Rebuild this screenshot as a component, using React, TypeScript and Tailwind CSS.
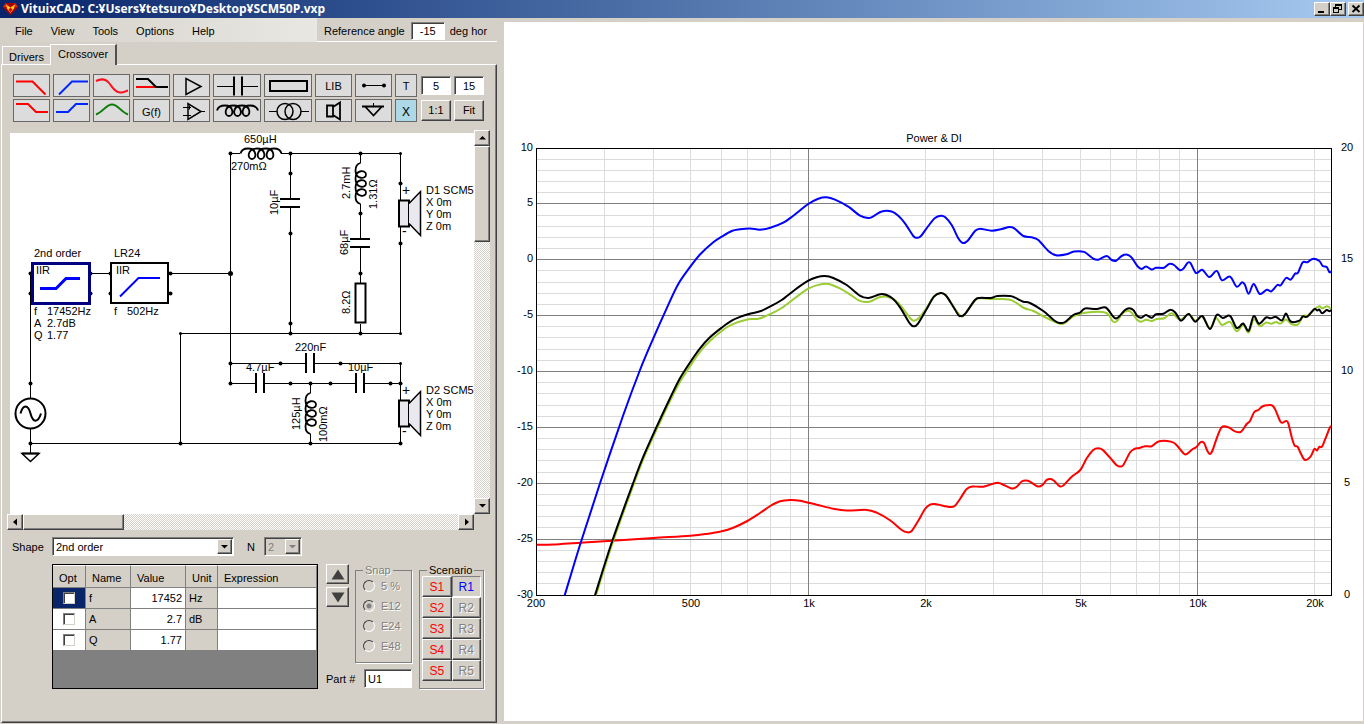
import React from "react";
import clsx from "clsx";

const raised =
  "border border-t-white border-l-white border-r-[#404040] border-b-[#404040] shadow-[inset_-1px_-1px_0_#808080] bg-[#d4d0c8]";
const sunken =
  "border border-t-[#808080] border-l-[#808080] border-r-white border-b-white shadow-[inset_1px_1px_0_#404040]";
const etched = "text-[#808080] [text-shadow:1px_1px_0_white]";
const groupBox = "border border-[#808080] shadow-[1px_1px_0_white]";
const track =
  "bg-[repeating-conic-gradient(#ffffff_0_25%,#d4d0c8_0_50%)] bg-[length:2px_2px]";

type Point = [number, number];

// Catmull-Rom through all points, written as cubic beziers
const smooth = (pts: Point[]) =>
  pts.reduce((d, p, i) => {
    if (i === 0) return `M${p[0]} ${p[1]}`;
    const a = pts[i - 2] || pts[i - 1];
    const b = pts[i - 1];
    const c = pts[i + 1] || p;
    const k = 6;
    return `${d}C${b[0] + (p[0] - a[0]) / k} ${b[1] + (p[1] - a[1]) / k} ${
      p[0] - (c[0] - b[0]) / k
    } ${p[1] - (c[1] - b[1]) / k} ${p[0]} ${p[1]}`;
  }, "");

export default () => {
  return (
    <div className="min-h-screen flex flex-col bg-[#d4d0c8] text-black text-[11px] leading-[14px] font-['Liberation_Sans',Arial,sans-serif]">
      <TitleBar />
      <main className="flex flex-1">
        <div className="w-[497px] shrink-0 flex flex-col">
          <MenuBar />
          <Tabs />
          <section className="flex-1 ml-px mb-px border border-t-white border-l-white border-r-[#404040] border-b-[#404040] shadow-[inset_-1px_-1px_0_#808080]">
            <Toolbar />
            <Schematic />
            <ShapeRow />
            <div className="flex ml-[50px] mt-2">
              <ParameterTable />
              <div className="ml-2">
                <div className="flex">
                  <MoveButtons />
                  <Snap />
                </div>
                <div className="flex items-center justify-between mt-[6px]">
                  <label htmlFor="part">Part #</label>
                  <input
                    id="part"
                    defaultValue="U1"
                    className={clsx("w-12 h-[19px] px-[3px] bg-white", sunken)}
                  />
                </div>
              </div>
              <Scenario />
            </div>
          </section>
        </div>
        <section className="flex flex-1 min-w-0 bg-white mt-1 ml-[7px] mr-px mb-[3px]">
          <Chart />
        </section>
      </main>
    </div>
  );
};

const TitleBar = () => (
  <header className="h-[18px] flex items-center bg-linear-to-r from-[#0a246a] to-[#a6caf0] pl-[3px]">
    <svg className="w-[15px] h-3" viewBox="0 0 15 12">
      <path d="M3 0h9l3 4-7.500 8L0 4z" fill="#b80000" />
      <path d="M0 4L3 0l2 4zM10 4l2-4 3 4z" fill="#e02a10" />
      <path d="M3 1.500l4.500 3 4.500-3-1 4-3.500 4.500-3.500-4.500z" fill="#ffd020" />
      <path d="M7.500 4.500l2 2-2 3-2-3z" fill="#d01000" />
      <path d="M5 1h5l-2.500 1.500z" fill="#7a0000" />
    </svg>
    <h1 className="flex-1 pl-[3px] text-xs font-bold text-white font-['Open_Sans','Liberation_Sans',sans-serif]">
      VituixCAD: C:¥Users¥tetsuro¥Desktop¥SCM50P.vxp
    </h1>
    <div className="flex">
      <button aria-label="Minimize" className={clsx("w-4 h-[14px]", raised)}>
        <svg className="w-full h-full" viewBox="0 0 14 12">
          <path d="M3 9h6" stroke="black" strokeWidth="2" />
        </svg>
      </button>
      <button aria-label="Restore" className={clsx("w-4 h-[14px]", raised)}>
        <svg
          className="w-full h-full"
          viewBox="0 0 14 12"
          fill="none"
          stroke="black"
          shapeRendering="crispEdges"
        >
          <path d="M4.500 5V1.500h6v5H8M4 2h7" />
          <path d="M2.500 4.500h5v5h-5zM2 5h6" />
        </svg>
      </button>
      <button
        aria-label="Close"
        className={clsx("w-4 h-[14px] ml-[2px]", raised)}
      >
        <svg className="w-full h-full" viewBox="0 0 14 12">
          <path
            d="M3.500 2.500l7 6.500M10.500 2.500l-7 6.500"
            stroke="black"
            strokeWidth="1.800"
          />
        </svg>
      </button>
    </div>
  </header>
);

const MenuBar = () => (
  <div className="flex h-6">
    <nav className="w-[317px] flex items-center gap-[18px] pl-[15px] pt-[2px] bg-linear-to-r from-[#d4d0c8] to-[#e8e7e2]">
      {["File", "View", "Tools", "Options", "Help"].map((m) => (
        <button key={m}>{m}</button>
      ))}
    </nav>
    <div className="flex-1 flex items-center pl-[7px] pt-[2px] border-b border-white">
      <label htmlFor="angle">Reference angle</label>
      <input
        id="angle"
        defaultValue="-15"
        className={clsx(
          "w-[34px] h-[18px] ml-[6px] px-[2px] text-center bg-white",
          sunken
        )}
      />
      <span className="ml-[5px]">deg hor</span>
    </div>
  </div>
);

const Tabs = () => (
  <div role="tablist" className="flex items-end h-[22px] pl-[2px]">
    <button
      role="tab"
      aria-selected="false"
      className="w-12 h-[18px] pt-[2px] border-t border-l border-white"
    >
      Drivers
    </button>
    <button
      role="tab"
      aria-selected="true"
      className="relative w-[67px] h-[21px] -mb-px pb-[2px] bg-[#d4d0c8] border-t border-l border-r-2 border-t-white border-l-white border-r-[#505050]"
    >
      Crossover
    </button>
  </div>
);

// a run of wire loops, arcs above the axis
const coil = (x0: number, x1: number, first: number, pitch: number, n: number) => {
  let d = `M${x0} 0C${x0 + 1} -4 ${x0 + 4} -5 ${first - 4} -5`;
  for (let i = 0; i < n; i++) {
    const c = first + pitch * i;
    const next = i === n - 1 ? c + 4 : c + pitch - 4;
    d += `C${c + 5} -5 ${c + 5} 5.500 ${c} 5.500C${c - 5} 5.500 ${c - 5} -5 ${next} -5`;
  }
  return `${d}C${x1 - 4} -5 ${x1 - 1} -4 ${x1} 0`;
};

const Tool = ({
  name,
  wide,
  children,
}: {
  name: string;
  wide?: boolean;
  children: React.ReactNode;
}) => (
  <button
    aria-label={name}
    className="h-[23px] border border-[#686868] bg-[#dcdcdc]"
  >
    <svg
      className="w-full h-full"
      viewBox={wide ? "1 1 46 21" : "1 1 35 21"}
      fill="none"
      stroke="black"
      strokeWidth="2"
    >
      {children}
    </svg>
  </button>
);

const textTool = "h-[23px] border border-[#686868] bg-[#dcdcdc]";
const pushButton = clsx("h-[21px] mt-px pb-px", raised);

const Toolbar = () => (
  <div className="flex gap-1 ml-[11px] mt-[9px]">
    <div className="grid grid-cols-[repeat(5,37px)_48px_48px_37px_37px_22px] gap-x-[3px] gap-y-[2px]">
      <Tool name="Low pass">
        <path d="M3 7.500H19.500L32.500 20.500" stroke="red" />
      </Tool>
      <Tool name="High pass">
        <path d="M6 20.500L19 7.500H35" stroke="#0026ff" />
      </Tool>
      <Tool name="All pass">
        <path
          d="M3 7C7 5 12 4 16 9C20 14 22 18 27 18.500C30 19 32 17.500 35 16.500"
          stroke="#ff1020"
        />
      </Tool>
      <Tool name="Shelf">
        <path d="M3 13H23" stroke="red" />
        <path d="M3 5H15L23 13H35" />
      </Tool>
      <Tool name="Buffer">
        <path d="M13 4.500V20.500L28 12.500z" strokeWidth="1.500" />
      </Tool>
      <Tool name="Capacitor" wide>
        <path d="M4 12.500H21M29 12.500H45" strokeWidth="1" />
        <path d="M21 2.500V21.500M29 2.500V21.500" />
      </Tool>
      <Tool name="Resistor" wide>
        <path d="M6 7H43V17H6z" />
      </Tool>
      <button className={textTool}>LIB</button>
      <Tool name="Wire">
        <path d="M8.500 11.500H29.500" strokeWidth="1" />
        <circle cx="9" cy="11.500" r="1" />
        <circle cx="29" cy="11.500" r="1" />
      </Tool>
      <button className={textTool}>T</button>
      <Tool name="Low shelf">
        <path d="M3 5H15L23 13H35" stroke="red" />
      </Tool>
      <Tool name="High shelf">
        <path d="M3 13H15L23 5H35" stroke="#0026ff" />
      </Tool>
      <Tool name="Peak">
        <path d="M3 15.500C10 13 13 5.500 19 5.500S28 13 35 15.500" stroke="#0a7d0a" />
      </Tool>
      <button className={clsx(textTool, "pt-[3px]")}>G(f)</button>
      <Tool name="Op-amp">
        <path d="M15 4.500V20.500L28 12.500z" strokeWidth="1.500" />
        <path
          d="M10 8.500H18M10 16.500H18M28 12.500H32M16.500 6.500V10.500"
          strokeWidth="1"
        />
      </Tool>
      <Tool name="Inductor" wide>
        <path
          d={coil(-20.5, 20.5, -8.5, 8.5, 3)}
          transform="translate(24.500 11.500)"
          strokeWidth="1.800"
        />
      </Tool>
      <Tool name="Transformer" wide>
        <g strokeWidth="1.500">
          <circle cx="21" cy="12.500" r="8" />
          <circle cx="29" cy="12.500" r="8" />
          <path d="M5 12.500H13M37 12.500H45" strokeWidth="1" />
        </g>
      </Tool>
      <Tool name="Driver">
        <path d="M12 6.500H18V17.500H12zM18 8L25 3.500V20.500L18 16" strokeWidth="1.800" />
      </Tool>
      <Tool name="Ground">
        <path d="M7 7.500H29M10.500 8L18.500 16.500L26.500 8" strokeWidth="1.800" />
        <path d="M18.500 4V8" strokeWidth="1" />
      </Tool>
      <button className="h-[23px] pt-[3px] border border-[#686868] bg-[#add8e6] text-xs">
        X
      </button>
    </div>
    <div className="grid grid-cols-[30px_30px] grid-rows-[23px_23px] gap-x-[3px] gap-y-[2px]">
      <input
        aria-label="Grid"
        defaultValue="5"
        className={clsx("h-[19px] mt-[2px] min-w-0 text-center bg-white", sunken)}
      />
      <input
        aria-label="Step"
        defaultValue="15"
        className={clsx("h-[19px] mt-[2px] min-w-0 text-center bg-white", sunken)}
      />
      <button className={pushButton}>1:1</button>
      <button className={pushButton}>Fit</button>
    </div>
  </div>
);

const arrows = {
  up: "M4 8.500L7.500 5L11 8.500z",
  down: "M4 5L7.500 8.500L11 5z",
  left: "M9 3.500L5 7L9 10.500z",
  right: "M6 3.500L10 7L6 10.500z",
};

const ScrollButton = ({ dir }: { dir: keyof typeof arrows }) => (
  <button
    aria-label={`Scroll ${dir}`}
    className={clsx("w-4 h-4 shrink-0", raised)}
  >
    <svg className="w-full h-full" viewBox="0 0 14 14">
      <path d={arrows[dir]} />
    </svg>
  </button>
);

const Dot = ({ x, y, r = 2 }: { x: number; y: number; r?: number }) => (
  <circle cx={x} cy={y} r={r} fill="black" stroke="none" />
);

const dots: Point[] = [
  [30.5, 273.5], [30.5, 293.5], [90.5, 273.5], [90.5, 293.5],
  [110.5, 273.5], [110.5, 293.5], [170.5, 273.5], [170.5, 293.5],
  [30.5, 383.5], [30.5, 443.5], [180.5, 443.5],
  [230.5, 153.5], [230.5, 363.5], [230.5, 383.5],
  [290.5, 153.5], [290.5, 173.5], [290.5, 233.5], [290.5, 323.5], [290.5, 333.5],
  [360.5, 153.5], [360.5, 213.5], [360.5, 273.5], [360.5, 333.5],
  [400.5, 183.5], [400.5, 243.5],
  [280.5, 363.5], [340.5, 363.5],
  [290.5, 383.5], [310.5, 383.5], [330.5, 383.5], [390.5, 383.5], [400.5, 383.5],
  [310.5, 443.5], [400.5, 443.5],
];

// wire corners carry a smaller dot
const corners: Point[] = [
  [180.5, 333.5], [400.5, 153.5], [400.5, 333.5], [400.5, 363.5],
];

const labels: [number, number, string][] = [
  [34, 257, "2nd order"], [36, 274, "IIR"],
  [34, 315, "f"], [47, 315, "17452Hz"],
  [34, 327, "A"], [47, 327, "2.7dB"],
  [34, 339, "Q"], [47, 339, "1.77"],
  [114, 257, "LR24"], [116, 274, "IIR"],
  [114, 315, "f"], [127, 315, "502Hz"],
  [244, 143, "650µH"], [231, 170, "270mΩ"],
  [295, 351, "220nF"], [246, 371, "4.7µF"], [348, 371, "10µF"],
];

const verticalLabels: [number, number, string][] = [
  [278, 215, "10µF"], [350, 199, "2.7mH"], [377, 209, "1.31Ω"],
  [348, 255, "68µF"], [350, 314, "8.2Ω"],
  [300, 430, "125µH"], [327, 442, "100mΩ"],
];

const Driver = ({ y, name }: { y: number; name: string }) => (
  <g transform={`translate(0 ${y})`}>
    <path d="M399 200.500H409V226.500H399z" fill="#e8e8ee" strokeWidth="2" />
    <path d="M409 203.500L420.500 191.500V235.500L409 223.500" fill="#e8e8ee" strokeWidth="1.500" />
    <g fill="black" stroke="none">
      <text x="402" y="195" className="text-sm">+</text>
      <text x="402" y="236" className="text-sm">-</text>
      <text x="426" y="194">{name}</text>
      <text x="426" y="206">X 0m</text>
      <text x="426" y="218">Y 0m</text>
      <text x="426" y="230">Z 0m</text>
    </g>
  </g>
);

const loops = coil(-20.5, 20.5, -9, 9, 3);

const Schematic = () => (
  <div className="grid grid-cols-[467px_16px] grid-rows-[384px_16px] ml-[5px] mt-2">
    <div className="pl-[3px] pt-[3px] min-w-0 overflow-hidden">
      <svg
        className="bg-white text-[11px]"
        width="464"
        height="381"
        viewBox="10 133 464 381"
        fill="none"
        stroke="black"
      >
        <path
          shapeRendering="crispEdges"
          d="M30.500 273V398M30.500 428V453M30.500 443.500H400.500M90 273.500H110M170 273.500H230.500M230.500 153V383.500M180.500 443V333.500H400.500M230 153.500H240M281 153.500H400.500V200M400.500 227V334M290.500 153V199M290.500 207V333M360.500 153V163M360.500 204V239M360.500 247V283M360.500 324V333M230 363.500H306M314 363.500H400.500V400M230 383.500H256M264 383.500H356M364 383.500H400M310.500 383V393M310.500 434V443M400.500 427V443"
        />
        <path
          shapeRendering="crispEdges"
          strokeWidth="2"
          d="M280 199H300M280 207H300M350 239H370M350 247H370M306 353V373M314 353V373M256 373V393M264 373V393M356 373V393M364 373V393"
        />
        <path d="M355.500 283.500H365.500V322.500H355.500z" fill="white" strokeWidth="2" />
        <path d={loops} transform="translate(261 153.500)" strokeWidth="1.800" />
        <path d={loops} transform="translate(360.500 183.500) rotate(-90)" strokeWidth="1.800" />
        <path d={loops} transform="translate(310.500 413.500) rotate(-90)" strokeWidth="1.800" />
        <circle cx="30.500" cy="413.500" r="15" fill="white" strokeWidth="2" />
        <path
          d="M20.500 413.500C23 404 28 404 30.500 413.500S38 423 41 413.500"
          strokeWidth="2"
        />
        <path d="M22 453.500H39L30.500 461.500z" fill="white" strokeWidth="1.500" />
        <path d="M22 453.500H39" strokeWidth="2" />
        {dots.map(([x, y]) => (
          <Dot key={`${x}-${y}`} x={x} y={y} />
        ))}
        {corners.map(([x, y]) => (
          <Dot key={`${x}-${y}`} x={x} y={y} r={1.5} />
        ))}
        <Dot x={230.5} y={273.5} r={2.5} />
        <rect x="32.500" y="263.500" width="57" height="40" fill="white" stroke="#000080" strokeWidth="3" />
        <rect x="111" y="263" width="57" height="40" fill="white" strokeWidth="2" />
        <path d="M40 288.500H56L66 278.500H80" stroke="blue" strokeWidth="3" />
        <path d="M120 296.500L138.500 278H160" stroke="blue" strokeWidth="2" />
        <Driver y={0} name="D1 SCM50" />
        <Driver y={200} name="D2 SCM50" />
        <g fill="black" stroke="none">
          {labels.map(([x, y, t]) => (
            <text key={`${x}-${y}`} x={x} y={y}>
              {t}
            </text>
          ))}
          {verticalLabels.map(([x, y, t]) => (
            <text key={t} transform={`translate(${x} ${y}) rotate(-90)`}>
              {t}
            </text>
          ))}
        </g>
      </svg>
    </div>
    <div className={clsx("flex flex-col", track)}>
      <ScrollButton dir="up" />
      <div className={clsx("h-24", raised)} />
      <div className="flex-1" />
      <ScrollButton dir="down" />
    </div>
    <div className={clsx("flex", track)}>
      <ScrollButton dir="left" />
      <div className={clsx("w-[101px]", raised)} />
      <div className="flex-1" />
      <ScrollButton dir="right" />
    </div>
  </div>
);

const DropDown = ({
  id,
  value,
  className,
  disabled,
}: {
  id: string;
  value: string;
  className: string;
  disabled?: boolean;
}) => (
  <div className={clsx("relative h-[19px]", className)}>
    <select
      id={id}
      disabled={disabled}
      className={clsx(
        "appearance-none w-full h-full pl-[3px]",
        sunken,
        disabled ? "bg-[#d4d0c8] text-[#808080]" : "bg-white"
      )}
    >
      <option>{value}</option>
    </select>
    <span
      className={clsx(
        "absolute right-[2px] top-[2px] w-[15px] h-[15px] pointer-events-none",
        raised
      )}
    >
      <svg className="w-full h-full" viewBox="0 0 13 13">
        <path d="M3 5L6.500 8.500L10 5z" fill={disabled ? "#808080" : "black"} />
      </svg>
    </span>
  </div>
);

const ShapeRow = () => (
  <div className="flex items-center mt-[7px] ml-[10px]">
    <label htmlFor="shape" className="w-10">
      Shape
    </label>
    <DropDown id="shape" value="2nd order" className="w-[182px]" />
    <label htmlFor="order" className="ml-[13px] w-[17px]">
      N
    </label>
    <DropDown id="order" value="2" className="w-[38px]" disabled />
  </div>
);

const params = [
  { name: "f", value: "17452", unit: "Hz", active: true },
  { name: "A", value: "2.7", unit: "dB" },
  { name: "Q", value: "1.77", unit: "" },
];

const cell = "border-r border-b border-[#808080] p-0";

const ParameterTable = () => (
  <div className="w-[266px] h-[125px] border border-black bg-[#808080]">
    <table className="w-full table-fixed border-separate border-spacing-0 bg-[#d4d0c8]">
      <colgroup>
        <col className="w-[33px]" />
        <col className="w-[45px]" />
        <col className="w-[55px]" />
        <col className="w-[32px]" />
        <col />
      </colgroup>
      <thead>
        <tr className="h-[23px]">
          {["Opt", "Name", "Value", "Unit", "Expression"].map((h) => (
            <th
              key={h}
              className="p-0 pl-[6px] pt-[2px] text-left font-normal border-t border-t-white border-r border-b border-r-[#808080] border-b-[#808080]"
            >
              {h}
            </th>
          ))}
        </tr>
      </thead>
      <tbody>
        {params.map((p) => (
          <tr key={p.name} className="h-[21px]">
            <td className={clsx(cell, p.active ? "bg-[#0a246a]" : "bg-white")}>
              <input
                type="checkbox"
                aria-label={`Optimize ${p.name}`}
                className={clsx(
                  "appearance-none block mx-auto -mt-px w-3 h-3 bg-white border border-t-[#808080] border-l-[#808080] border-r-[#d4d0c8] border-b-[#d4d0c8] shadow-[inset_1px_1px_0_#404040]"
                )}
              />
            </td>
            <td className={clsx(cell, "pl-[3px]")}>{p.name}</td>
            <td className={clsx(cell, "bg-white")}>
              <input
                aria-label={`Value of ${p.name}`}
                defaultValue={p.value}
                className="block w-full h-5 pr-[3px] text-right"
              />
            </td>
            <td className={clsx(cell, "pl-[3px]")}>{p.unit}</td>
            <td className={clsx(cell, "bg-white")}>
              <input
                aria-label={`Expression for ${p.name}`}
                className="block w-full h-5 px-1"
              />
            </td>
          </tr>
        ))}
      </tbody>
    </table>
  </div>
);

const MoveButtons = () => (
  <div className="flex flex-col gap-[3px] mr-[6px]">
    <button aria-label="Move up" className={clsx("w-[23px] h-5", raised)}>
      <svg className="w-full h-full" viewBox="0 0 21 18">
        <path d="M4.500 14.500L11 4.500L17.500 14.500z" fill="#404040" />
      </svg>
    </button>
    <button aria-label="Move down" className={clsx("w-[23px] h-5", raised)}>
      <svg className="w-full h-full" viewBox="0 0 21 18">
        <path d="M4.500 4.500L11 14.500L17.500 4.500z" fill="#404040" />
      </svg>
    </button>
  </div>
);

const Snap = () => (
  <fieldset disabled className={clsx("w-[57px] h-[99px] pl-[7px]", groupBox)}>
    <legend className={clsx("px-[2px] leading-3", etched)}>Snap</legend>
    {["5 %", "E12", "E24", "E48"].map((s) => (
      <label key={s} className={clsx("flex items-center gap-[6px] h-5", etched)}>
        <input
          type="radio"
          name="snap"
          defaultChecked={s === "E12"}
          className="appearance-none w-3 h-3 rounded-full border border-t-[#404040] border-l-[#404040] border-r-white border-b-white checked:bg-[radial-gradient(#808080_0_2px,transparent_3px)]"
        />
        {s}
      </label>
    ))}
  </fieldset>
);

const Scenario = () => (
  <fieldset className={clsx("w-[65px] h-[125px] ml-[7px] px-[2px]", groupBox)}>
    <legend className="ml-[5px] px-[2px] leading-3">Scenario</legend>
    <div className="grid grid-cols-2">
      {[1, 2, 3, 4, 5].map((n) => (
        <React.Fragment key={n}>
          <button className={clsx("h-[21px] text-xs text-[#ff0000]", raised)}>
            S{n}
          </button>
          <button
            disabled={n > 1}
            className={clsx(
              "h-[21px] text-xs",
              n === 1
                ? "text-[#0000ff] border border-[#808080] border-r-white border-b-white"
                : [etched, raised]
            )}
          >
            R{n}
          </button>
        </React.Fragment>
      ))}
    </div>
  </fieldset>
);

const blue: Point[] = [
  [564.7, 595.3], [580.7, 542.7], [600, 483.3], [623.3, 415], [640, 370], [653.3, 338.3],
  [666.7, 308.3], [678.3, 284], [690.3, 266.7], [700, 254.5], [713.3, 242.3], [721.7, 236.7],
  [731.7, 231], [740, 229.3], [750, 228.5], [760, 229.7], [770.3, 227.7], [783.3, 222.7],
  [793.3, 215.7], [808.3, 204], [818.3, 198.7], [826.7, 197.3], [835, 199.7], [848.3, 206.7],
  [860, 215.7], [868.3, 218], [873.3, 216.3], [881.7, 211.5], [891.7, 211.5], [898.3, 215.7],
  [905, 223.3], [913.3, 236], [916.7, 237.7], [920.7, 236.3], [928.3, 226], [935, 218],
  [940.7, 215.7], [945, 217], [951.7, 225], [958.3, 238.3], [962.7, 243], [967.7, 240.7],
  [975, 231], [980, 228.7], [991.7, 230.7], [1001.7, 229], [1009.3, 227], [1014.3, 228.3],
  [1023.3, 236], [1031.7, 237.3], [1038.3, 240], [1048.3, 251], [1056, 255.3], [1066.7, 254.3],
  [1074, 251.5], [1084, 251.9], [1093.3, 258.7], [1098.3, 259.7], [1106.7, 255.9], [1111.7, 260],
  [1116, 260.7], [1121.7, 256], [1127.3, 254.7], [1131.7, 257.7], [1137.3, 266], [1141.7, 269],
  [1146, 266.5], [1151.7, 269.5], [1156, 267.7], [1164, 267.7], [1169.3, 263.9], [1174, 265],
  [1180, 270.3], [1184, 268], [1187.7, 262.7], [1190.7, 263.3], [1196, 273], [1202.3, 269.7],
  [1209.3, 277], [1216.7, 270.9], [1222, 280.3], [1230, 276.7], [1236.7, 286.7], [1242, 282.3],
  [1245, 285], [1248.7, 293.7], [1253.7, 284], [1259.7, 294], [1266.7, 289.7], [1271.3, 291.3],
  [1277.3, 285], [1280.7, 285.3], [1286, 278], [1290.7, 279.7], [1295, 273.7], [1298, 272.7],
  [1302.7, 262.3], [1307.3, 262.3], [1312.7, 258.9], [1319.3, 261], [1322.7, 266], [1326.7, 267],
  [1329.3, 272], [1331, 271.7],
];

const black: Point[] = [
  [595, 595.3], [612, 541.7], [633.3, 482.7], [643.3, 456.7], [656.7, 426.7], [670, 398.3],
  [680, 378.3], [691.7, 360], [700, 348.3], [710, 337.3], [721.7, 327.7], [731.7, 320.7],
  [741.7, 316.3], [750.7, 313.5], [760, 311.3], [770.3, 306.3], [781.7, 300], [795, 289.7],
  [808.3, 280.7], [816.7, 277.2], [825, 276], [833.3, 278], [846.7, 285], [859.3, 295.3],
  [868.3, 298], [881.7, 294], [891.7, 297.7], [900, 307.3], [910, 323.7], [914, 326.3],
  [918, 323.7], [926.7, 309], [934, 296.7], [940.7, 293], [945.7, 295.3], [952.7, 305.7],
  [958.3, 315], [960.7, 316], [965, 314], [975, 300], [980, 297.9], [990.7, 298],
  [997.3, 296], [1010, 296], [1015, 297.7], [1023.3, 301.7], [1030, 303], [1043.3, 311],
  [1055, 321], [1060, 323], [1065, 322], [1073.3, 315], [1080, 312.7], [1085, 308.5],
  [1096.7, 309], [1105.7, 307.5], [1113.3, 316.7], [1117.3, 318], [1125, 310], [1129.3, 308.2],
  [1133.3, 310], [1137.3, 316], [1141.3, 317.7], [1146, 314.9], [1151.7, 317.7], [1156, 314.3],
  [1163.3, 313.7], [1170, 309.9], [1175, 312.3], [1180, 320], [1182.7, 319.7], [1188.7, 314],
  [1195.3, 321.7], [1202.3, 316], [1210, 329], [1216.7, 314.9], [1222.7, 318], [1230, 315.9],
  [1236, 327.3], [1239.3, 327], [1243.3, 323.5], [1248.7, 330.7], [1253.7, 316], [1259, 323.7],
  [1266, 317.5], [1270.7, 318.3], [1276, 316.9], [1282, 320.5], [1286, 313.5], [1290.7, 321.5],
  [1299.3, 320.7], [1302.7, 316.3], [1307.3, 316.7], [1314.3, 309.2], [1317.3, 310.5],
  [1319.3, 309.7], [1322.3, 313.3], [1326.7, 310], [1329.3, 311.3], [1331, 310],
];

const green: Point[] = [
  [596, 595.3], [613, 541.7], [634.3, 482.7], [644.3, 456.7], [657.7, 427.2], [671, 399],
  [681.5, 379.3], [693, 361.7], [701.7, 349.7], [711, 340], [721.7, 331], [731.7, 324.7],
  [748.3, 319.3], [758.3, 318.8], [770.3, 314], [781.7, 308], [795, 298], [808.3, 288.7],
  [818.3, 284.9], [828.3, 284], [838.3, 287.7], [848.3, 293.3], [859.3, 300.7], [866.7, 302],
  [871.7, 301], [880, 297], [888.3, 297], [898.3, 303], [910, 318], [914, 320.7],
  [918.7, 318.3], [926.7, 307.7], [934, 296.3], [940.7, 293], [945.7, 295.3], [952.7, 305.7],
  [960.7, 316], [965, 314], [975, 300.3], [980, 298.3], [990.7, 299], [1010, 299.7],
  [1024, 308], [1033.3, 311], [1046.7, 318], [1060, 323.7], [1065, 323], [1073.3, 316.3],
  [1085, 312.7], [1105.7, 312.7], [1112.7, 321.3], [1116.7, 321.3], [1123.3, 312.7],
  [1130, 311.3], [1137.3, 320], [1141.3, 321.7], [1146, 319.7], [1151.7, 321], [1156.7, 319],
  [1164.3, 318.3], [1171.7, 313.2], [1180, 319.7], [1188.7, 314.3], [1195.3, 320.7],
  [1202.3, 316.7], [1210, 328], [1216, 318], [1222, 325], [1230, 321.9], [1236.7, 331.3],
  [1243.3, 325], [1248.7, 332.5], [1253.7, 319.5], [1260, 326.3], [1266, 322.5], [1271.3, 323.7],
  [1276, 322], [1280.7, 323.5], [1286, 319.5], [1291.3, 324], [1298, 324.3], [1303.3, 316],
  [1308.3, 315.3], [1314.3, 309.3], [1319.3, 306.3], [1322.3, 308.3], [1327.3, 306.3], [1331, 309],
];

const red: Point[] = [
  [536.7, 544.7], [553, 544.5], [580, 542.7], [612, 540.7], [653.3, 538], [690.3, 535.7],
  [706.7, 533.9], [721.7, 531.3], [733.3, 527.7], [747.3, 521], [760, 513], [770.3, 506],
  [780, 501.3], [790, 499.9], [800, 500.7], [816.7, 504.7], [833.3, 508.7], [846.7, 510.5],
  [866.7, 509.9], [876.7, 512.7], [890, 520.3], [901.7, 530], [907.3, 532.3], [911.7, 531],
  [918.3, 520.7], [925, 509], [930, 504.7], [935, 504], [950, 507], [955, 505.7],
  [960, 499], [966.7, 489], [972.7, 486.5], [983.3, 486.7], [996, 482.9], [1001.7, 484],
  [1011.7, 488.5], [1016.7, 486.7], [1021.7, 481.5], [1026, 480.5], [1030, 481.7],
  [1038, 486.5], [1042.7, 484.7], [1046.7, 479.9], [1050.7, 479], [1054, 480.7], [1059.3, 486],
  [1063.3, 485.5], [1071.7, 476.7], [1080.3, 470], [1086.7, 458.3], [1093.3, 449.9],
  [1098.3, 448.3], [1102.7, 449.9], [1110, 457.7], [1116.7, 465.3], [1120, 466.5], [1123.3, 465],
  [1130, 452.5], [1134.3, 449], [1139.3, 448], [1145, 446.2], [1151.7, 446.2], [1159.3, 441.2],
  [1171.7, 441.9], [1176.7, 445.3], [1184, 453.8], [1187.3, 453.7], [1192.7, 449], [1196, 447.3],
  [1200.7, 442.2], [1204, 442.9], [1207.3, 450.7], [1210, 454], [1212.7, 450], [1216.7, 438.3],
  [1221.7, 427.2], [1228.3, 427.2], [1234, 430.9], [1240.7, 432], [1246.7, 424], [1250, 421],
  [1254.3, 412], [1258.3, 410], [1261.7, 406.9], [1265, 405.5], [1271.7, 405.2], [1275, 409],
  [1280, 421], [1282.7, 422.7], [1286, 420.9], [1288.3, 423.3], [1292, 438.3], [1294.7, 445.7],
  [1297.7, 446.9], [1300.7, 453.3], [1305, 460], [1310.7, 456.3], [1314.3, 449], [1317, 450.5],
  [1319.3, 446.9], [1322, 446.7], [1325, 439.7], [1330, 427.3], [1331, 427],
];

const xOf = (f: number) => Math.floor(808 + 389.3 * Math.log10(f / 1000)) + 0.5;
const yOf = (db: number) => Math.floor(148 + (10 - db) * 11.175 + 0.01) + 0.5;

const minorX = [
  300, 400, 500, 600, 700, 800, 900, 2000, 3000, 4000, 5000, 6000, 7000, 8000,
  9000, 20000,
];
const xTicks: [number, string][] = [
  [200, "200"], [500, "500"], [1000, "1k"], [2000, "2k"],
  [5000, "5k"], [10000, "10k"], [20000, "20k"],
];
const levels = Array.from({ length: 39 }, (_, i) => 9 - i);

const Chart = () => (
  <svg
    className="w-full text-[11px]"
    viewBox="504 22 859 699"
    role="img"
    aria-label="Power & DI"
    fill="none"
  >
    <text x="934" y="142" textAnchor="middle" fill="black">
      Power & DI
    </text>
    <g shapeRendering="crispEdges">
      {minorX.map((f) => (
        <path key={f} d={`M${xOf(f)} 148V595`} stroke="#dcdcdc" />
      ))}
      {levels
        .filter((db) => db % 5 !== 0)
        .map((db) => (
          <path key={db} d={`M536 ${yOf(db)}H1331`} stroke="#dcdcdc" />
        ))}
      {levels
        .filter((db) => db % 5 === 0)
        .map((db) => (
          <path key={db} d={`M536 ${yOf(db)}H1331`} stroke="#808080" />
        ))}
      <path d={`M${xOf(1000)} 148V595M${xOf(10000)} 148V595`} stroke="#808080" />
      <path d="M536.500 148.500H1331.500V595.500H536.500z" stroke="black" />
    </g>
    <g strokeWidth="2" strokeLinejoin="round">
      <path d={smooth(red)} stroke="#ff0000" />
      <path d={smooth(green)} stroke="#9acd32" />
      <path d={smooth(black)} stroke="black" />
      <path d={smooth(blue)} stroke="#0000ff" />
    </g>
    <g fill="black">
      {[10, 5, 0, -5, -10, -15, -20, -25, -30].map((db) => (
        <text key={db} x="533" y={Math.floor(yOf(db)) + 3} textAnchor="end">
          {db}
        </text>
      ))}
      {[20, 15, 10, 5, 0].map((di, i) => (
        <text key={di} x="1347" y={Math.floor(yOf(10 - i * 10)) + 3} textAnchor="middle">
          {di}
        </text>
      ))}
      {xTicks.map(([f, t]) => (
        <text key={t} x={Math.floor(xOf(f)) + 1} y="607" textAnchor="middle">
          {t}
        </text>
      ))}
    </g>
  </svg>
);
